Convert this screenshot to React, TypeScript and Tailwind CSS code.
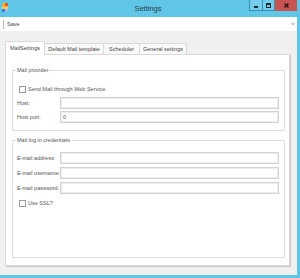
import React from "react";

function Checkbox() {
  return <div className="w-[7px] h-[7px] border border-[#9a9a9a] bg-white shrink-0" />;
}

function Field({ label, value = "" }: { label: string; value?: string }) {
  return (
    <div className="grid grid-cols-[43px_1fr] items-center">
      <span className="text-[5.5px] leading-[7px] whitespace-nowrap">{label}</span>
      <div className="h-[12px] border border-[#d2d2d2] shadow-[inset_0_0_0_1px_#ededed] bg-white flex items-center pl-[2px] text-[5.5px] leading-[7px]">
        {value}
      </div>
    </div>
  );
}

export default function App() {
  return (
    <div className="w-[300px] h-[278px] bg-[#5fc6e8] flex flex-col font-['Liberation_Sans',Arial,sans-serif] text-[#555] overflow-hidden">
      {/* title bar */}
      <div className="h-[17px] flex items-start shrink-0">
        <div className="w-[10px] pl-[2px] pt-[3px]">
          <svg width="6" height="9" viewBox="0 0 6 9">
            <rect x="0" y="0" width="6" height="4" fill="#f5b324" />
            <rect x="3" y="0" width="3" height="3" fill="#e8572a" />
            <rect x="0" y="4" width="6" height="3" fill="#f0d070" />
            <rect x="0" y="6" width="3" height="3" fill="#3b7fd6" />
            <rect x="3" y="6" width="3" height="3" fill="#9fbfe8" />
          </svg>
        </div>
        <div className="flex-1 pl-[37px] text-center text-[7.5px] leading-[17px] text-[#2b3b42]">Settings</div>
        <div className="flex h-[11px] mr-[3px]">
          <div className="w-[14px] h-[11px] border border-[#3a8fae] border-t-0 bg-[#74cdea] flex items-end justify-center pb-[2px]">
            <div className="w-[4px] h-[2px] bg-[#1d2a30]" />
          </div>
          <div className="w-[12px] h-[11px] border border-l-0 border-[#3a8fae] border-t-0 bg-[#74cdea] flex items-center justify-center">
            <div className="w-[5px] h-[5px] border border-t-2 border-[#1d2a30]" />
          </div>
          <div className="w-[22px] h-[11px] bg-[#c95452] flex items-center justify-center">
            <svg width="5" height="5" viewBox="0 0 5 5">
              <path d="M0.5 0.5 L4.5 4.5 M4.5 0.5 L0.5 4.5" stroke="#2a1010" strokeWidth="1.4" />
            </svg>
          </div>
        </div>
      </div>

      <div className="flex-1 flex flex-col mr-[3px] mb-[3px] bg-[#f0f0f0]">
        {/* toolbar */}
        <div className="h-[14px] bg-white flex items-center shrink-0">
          <div className="ml-[3px] w-px h-[9px] bg-[#b8b8b8]" />
          <span className="ml-[3px] text-[5.5px] leading-[7px] text-[#444]">Save</span>
          <div className="flex-1" />
          <svg width="4" height="4" viewBox="0 0 4 4" className="mr-[2px]">
            <path d="M0.5 1 L2 2.6 L3.5 1" stroke="#777" strokeWidth="0.8" fill="none" />
          </svg>
        </div>

        {/* body */}
        <div className="flex-1 flex flex-col pl-[5px] pr-[7px] pt-[10px] pb-[9px]">
          {/* tabs */}
          <div className="h-[14px] flex items-end relative z-10 -mb-px text-[5.5px] leading-[7px] text-[#444]">
            <div className="w-[40px] h-[14px] bg-white border border-b-0 border-[#d9d9d9] flex items-center justify-center">MailSettings</div>
            <div className="w-[60px] h-[12px] -ml-px bg-[#f9f9f9] border border-[#d9d9d9] flex items-center justify-center">Default Mail template</div>
            <div className="w-[37px] h-[12px] -ml-px bg-[#f9f9f9] border border-[#d9d9d9] flex items-center justify-center">Scheduler</div>
            <div className="w-[48px] h-[12px] -ml-px bg-[#f9f9f9] border border-[#d9d9d9] flex items-center justify-center">General settings</div>
          </div>

          {/* panel */}
          <div className="flex-1 flex flex-col bg-white border border-[#d9d9d9] shadow-[1px_1px_0_#c6c6c6] pt-[12px] pl-[6px] pr-[4px] pb-[7px]">
            <fieldset className="border border-[#e0e0e0] pl-[4px] pr-[5px] pb-[7px]">
              <legend className="-ml-px px-[1px] text-[5.5px] leading-[7px]">Mail provider</legend>
              <div className="mt-[12px] h-[7px] flex items-center gap-[2px] ml-[2px]">
                <Checkbox />
                <span className="text-[5.5px] leading-[7px]">Send Mail through Web Service</span>
              </div>
              <div className="mt-[4px] flex flex-col gap-[2px]">
                <Field label="Host:" />
                <Field label="Host port:" value="0" />
              </div>
            </fieldset>

            <fieldset className="mt-[6px] flex-1 border border-[#e0e0e0] pl-[4px] pr-[5px]">
              <legend className="-ml-px px-[1px] text-[5.5px] leading-[7px]">Mail log in credentials</legend>
              <div className="mt-[8px] flex flex-col gap-[3px]">
                <Field label="E-mail address:" />
                <Field label="E-mail username:" />
                <Field label="E-mail password:" />
              </div>
              <div className="mt-[6px] h-[7px] flex items-center gap-[2px] ml-[2px]">
                <Checkbox />
                <span className="text-[5.5px] leading-[7px]">Use SSL?</span>
              </div>
            </fieldset>
          </div>
        </div>
      </div>
    </div>
  );
}
